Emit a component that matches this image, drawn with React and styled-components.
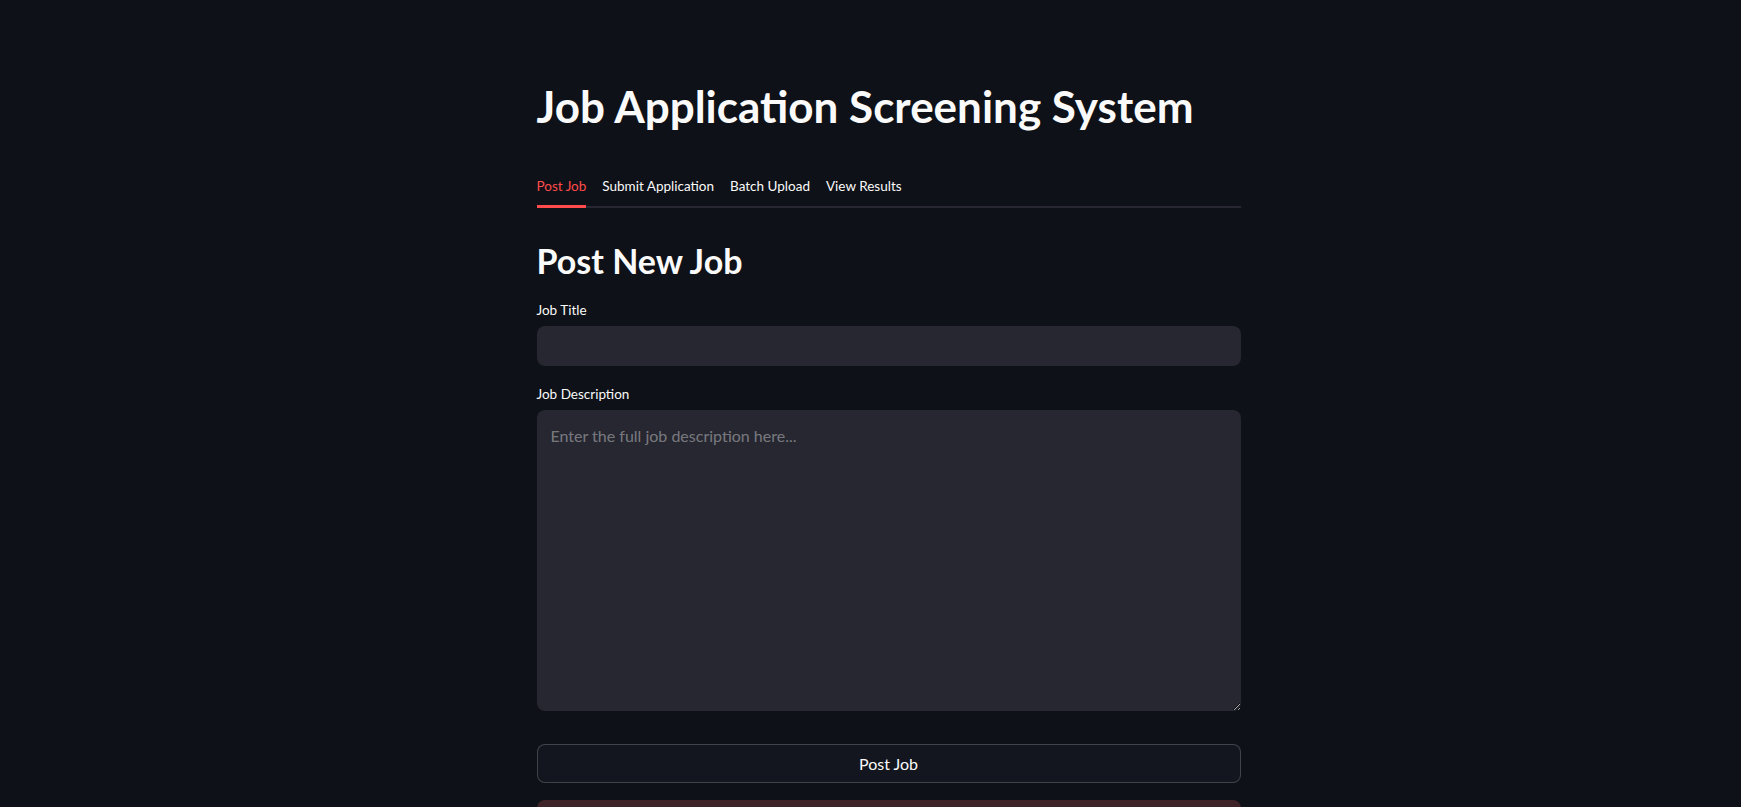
import React, { useState } from "react";
import styled, { createGlobalStyle } from "styled-components";

const Global = createGlobalStyle`
  html, body { margin: 0; padding: 0; background: #0e1117; }
  body { font-family: "Lato", "Noto Sans", sans-serif; color: #fafafa; }
  * { box-sizing: border-box; }
`;

const Page = styled.div`
  height: 807px;
  background: #0e1117;
  display: flex;
  justify-content: center;
  align-items: flex-start;
  padding-left: 36px;
  overflow: hidden;
`;

const Main = styled.main`
  width: 704px;
  padding-top: 80px;
  display: flex;
  flex-direction: column;
  & > * { flex-shrink: 0; }
`;

const Title = styled.h1`
  margin: 0;
  font-size: 44px;
  font-weight: 700;
  line-height: 52px;
`;

const TabBar = styled.div`
  margin-top: 44px;
  display: flex;
  gap: 16px;
  border-bottom: 2px solid #262730;
`;

const Tab = styled.button`
  background: none;
  border: none;
  padding: 0 0 9px;
  margin-bottom: -2px;
  font-family: inherit;
  font-size: 13.5px;
  line-height: 20px;
  color: ${(p) => (p.$active ? "#ff4b4b" : "#fafafa")};
  border-bottom: 3px solid ${(p) => (p.$active ? "#ff4b4b" : "transparent")};
  cursor: pointer;
`;

const Heading = styled.h2`
  margin: 31px 0 0;
  font-size: 34px;
  font-weight: 700;
  line-height: 44px;
`;

const Label = styled.label`
  display: block;
  font-size: 13.5px;
  line-height: 20px;
  margin-top: ${(p) => p.$top}px;
  margin-bottom: 6px;
  color: #fafafa;
`;

const Input = styled.input`
  width: 100%;
  height: 40px;
  background: #262730;
  border: none;
  border-radius: 8px;
  padding: 0 14px;
  color: #fafafa;
  font-family: inherit;
  font-size: 16px;
  outline: none;
`;

const TextArea = styled.textarea`
  width: 100%;
  height: 301px;
  background: #262730;
  border: none;
  border-radius: 8px;
  padding: 14px;
  color: #fafafa;
  font-family: inherit;
  font-size: 16px;
  line-height: 24px;
  outline: none;
  resize: vertical;
  &::placeholder { color: rgba(250, 250, 250, 0.4); }
`;

const Button = styled.button`
  margin-top: 33px;
  width: 100%;
  height: 39px;
  background: #13161e;
  border: 1px solid rgba(250, 250, 250, 0.2);
  border-radius: 8px;
  color: #fafafa;
  font-family: inherit;
  font-size: 16px;
  cursor: pointer;
`;

const Alert = styled.div`
  margin-top: 17px;
  height: 60px;
  border-radius: 8px;
  background: #3e2328;
`;

const tabs = ["Post Job", "Submit Application", "Batch Upload", "View Results"];

export default function App() {
  const [active, setActive] = useState(0);
  return (
    <>
      <Global />
      <Page>
        <Main>
          <Title>Job Application Screening System</Title>
          <TabBar>
            {tabs.map((t, i) => (
              <Tab key={t} $active={i === active} onClick={() => setActive(i)}>
                {t}
              </Tab>
            ))}
          </TabBar>
          <Heading>Post New Job</Heading>
          <Label $top={17}>Job Title</Label>
          <Input />
          <Label $top={18}>Job Description</Label>
          <TextArea placeholder="Enter the full job description here..." />
          <Button>Post Job</Button>
          <Alert />
        </Main>
      </Page>
    </>
  );
}
